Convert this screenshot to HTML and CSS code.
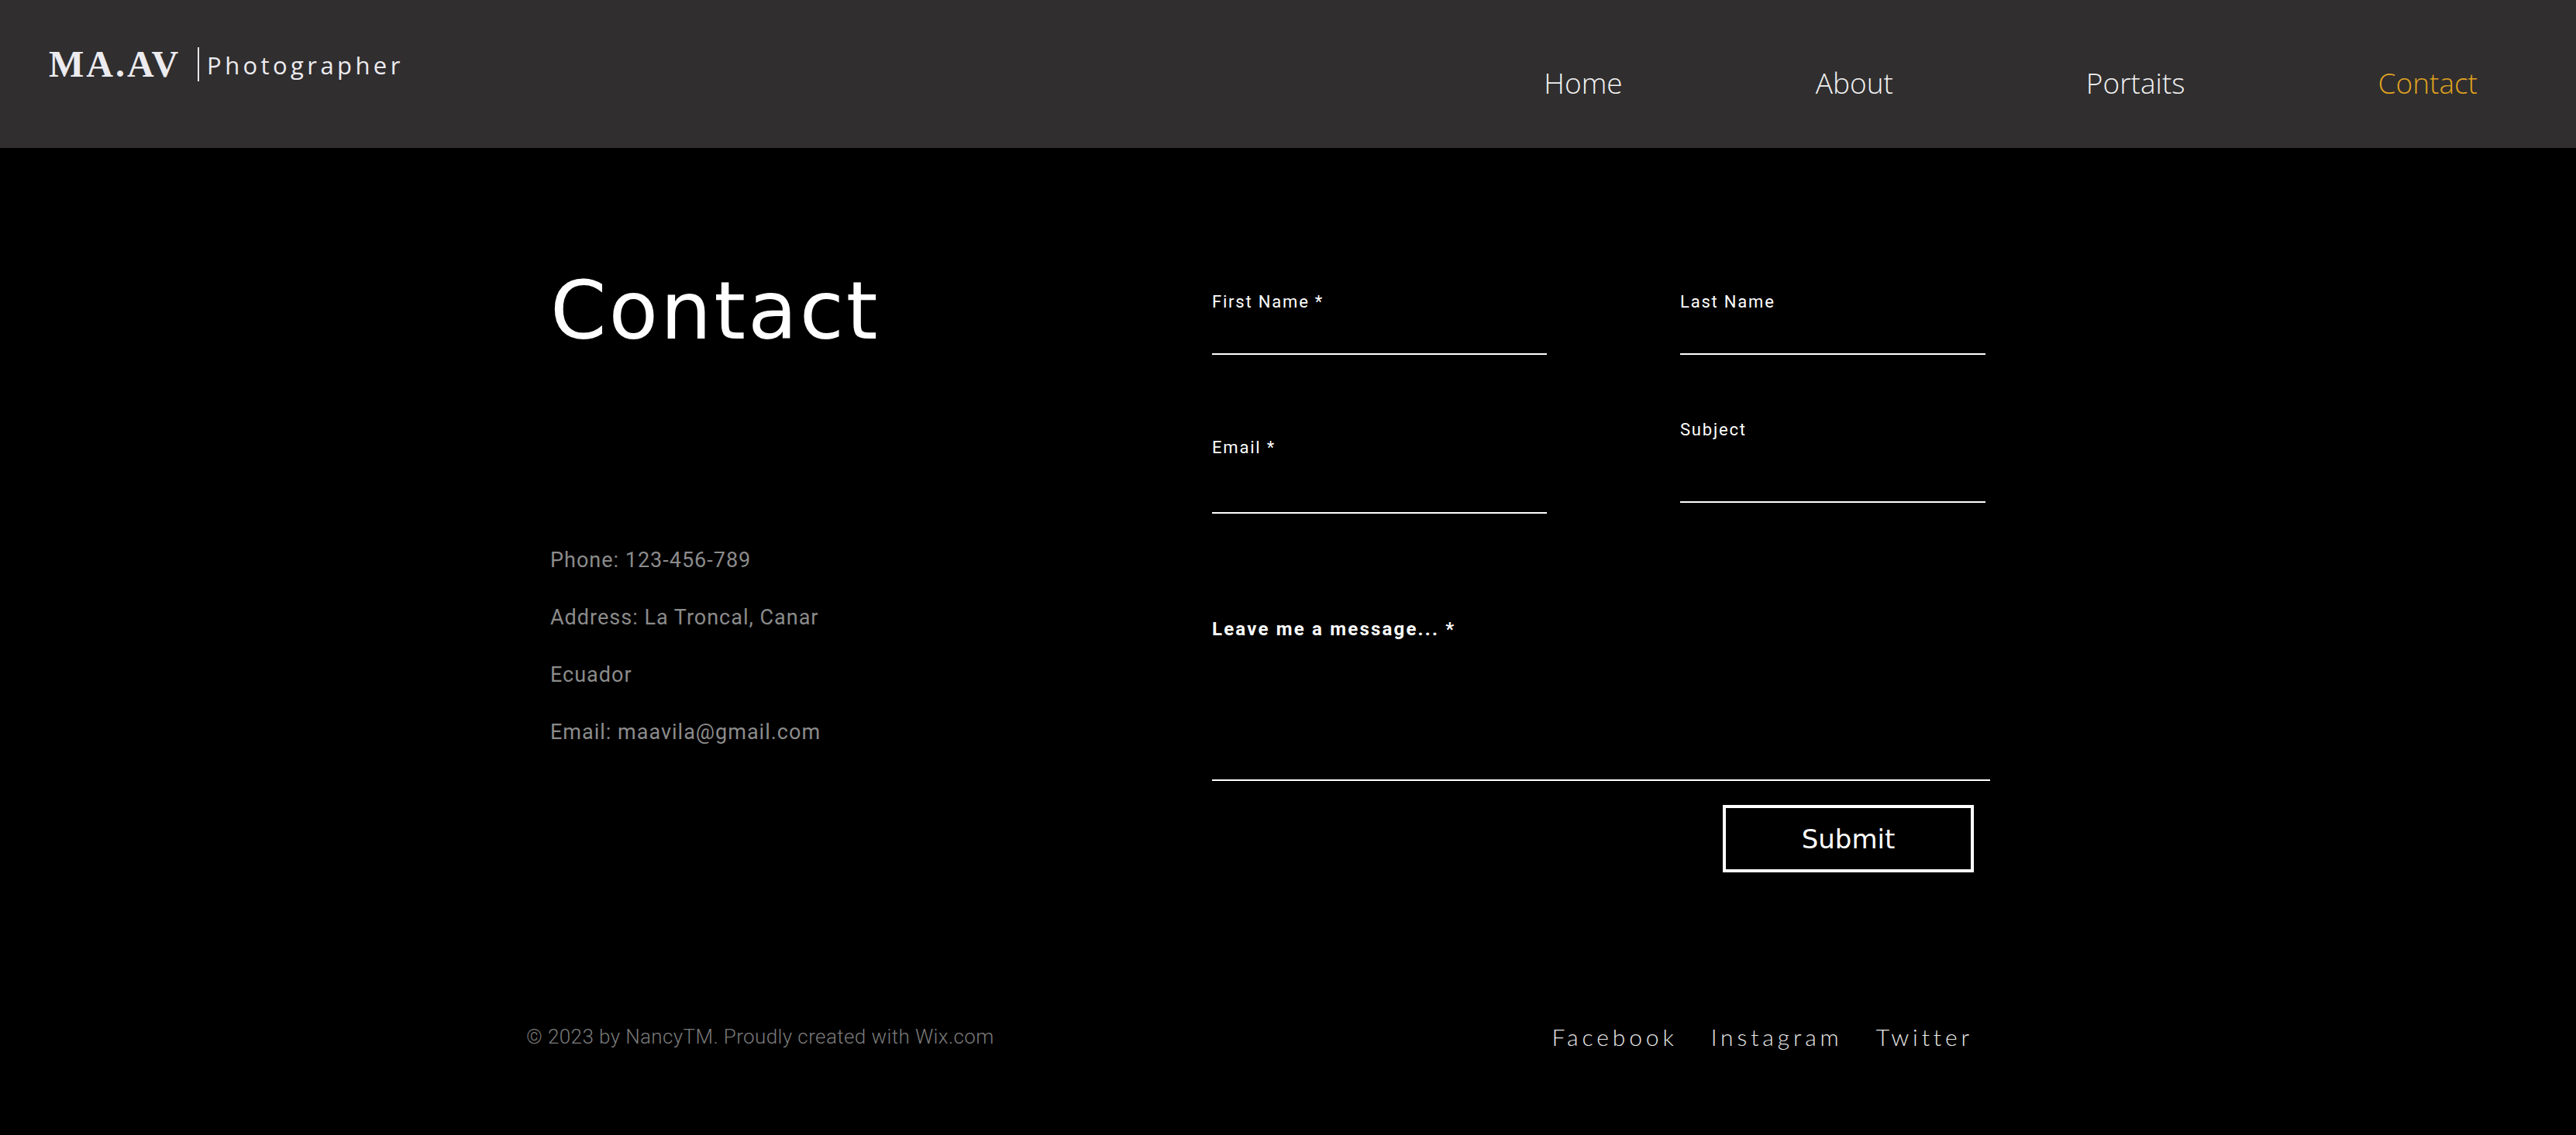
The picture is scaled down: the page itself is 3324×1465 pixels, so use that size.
FILE: index.html
```html
<!DOCTYPE html>
<html lang="en">
<head>
<meta charset="utf-8">
<title>Contact | MA.AV Photographer</title>
<link rel="stylesheet" href="styles.css">
</head>
<body>
<header class="site-header">
  <div class="logo">
    <span class="logo-mark">MA.AV</span>
    <span class="logo-sep"></span>
    <span class="logo-sub">Photographer</span>
  </div>
  <nav class="nav">
    <a class="nav-link" href="#">Home</a>
    <a class="nav-link" href="#">About</a>
    <a class="nav-link" href="#">Portaits</a>
    <a class="nav-link nav-link-active" href="#">Contact</a>
  </nav>
</header>
<main class="contact">
  <section class="info">
    <h1 class="info-title">Contact</h1>
    <ul class="info-list">
      <li>Phone: 123-456-789</li>
      <li>Address: La Troncal, Canar</li>
      <li>Ecuador</li>
      <li>Email: maavila@gmail.com</li>
    </ul>
  </section>
  <form class="form">
    <div class="form-row">
      <div class="form-col form-col-left">
        <div class="field field-first">
          <span class="field-label">First Name *</span>
          <span class="field-input"></span>
        </div>
        <div class="field field-email">
          <span class="field-label">Email *</span>
          <span class="field-input"></span>
        </div>
      </div>
      <div class="form-col form-col-right">
        <div class="field field-last">
          <span class="field-label">Last Name</span>
          <span class="field-input"></span>
        </div>
        <div class="field field-subject">
          <span class="field-label">Subject</span>
          <span class="field-input"></span>
        </div>
      </div>
    </div>
    <div class="field field-message">
      <span class="field-label field-label-bold">Leave me a message... *</span>
      <span class="field-input"></span>
    </div>
    <div class="form-actions">
      <button class="submit" type="button">Submit</button>
    </div>
  </form>
</main>
<footer class="site-footer">
  <p class="copyright">© 2023 by NancyTM. Proudly created with Wix.com</p>
  <div class="social">
    <a class="social-link" href="#">Facebook</a>
    <a class="social-link" href="#">Instagram</a>
    <a class="social-link" href="#">Twitter</a>
  </div>
</footer>
</body>
</html>
```
FILE: styles.css
```css
* { box-sizing: border-box; }
html, body { margin: 0; padding: 0; }
body {
  background: #000;
  color: #fff;
  font-family: Roboto, "Open Sans", sans-serif;
  width: 3324px;
  height: 1465px;
  overflow: hidden;
}
a { text-decoration: none; color: inherit; }

/* Header */
.site-header {
  height: 191px;
  background: #302e2f;
  display: flex;
  align-items: center;
  justify-content: space-between;
  padding: 0 127px 0 63px;
}
.logo {
  display: flex;
  align-items: center;
  margin-top: -26px;
}
.logo-mark {
  font-family: "Liberation Serif", serif;
  font-weight: 700;
  font-size: 48px;
  letter-spacing: 3px;
  color: #ecebef;
}
.logo-sep {
  width: 2px;
  height: 44px;
  background: #e6e6ea;
  margin: 0 10px 0 22px;
}
.logo-sub {
  font-family: "Open Sans", sans-serif;
  font-weight: 400;
  font-size: 31px;
  letter-spacing: 4.4px;
  color: #ecebef;
  margin-top: 2px;
}
.nav {
  display: flex;
  gap: 249px;
  margin-top: 22px;
}
.nav-link {
  font-family: "Open Sans", sans-serif;
  font-weight: 300;
  font-size: 37px;
  color: #f2f2f2;
}
.nav-link-active { color: #e0a420; }

/* Main */
.contact {
  display: flex;
  padding: 158px 0 0 710px;
  height: 935px;
}
.info { width: 854px; }
.info-title {
  margin: 0;
  font-family: "DejaVu Sans", sans-serif;
  font-weight: 400;
  font-size: 104px;
  letter-spacing: 3px;
  line-height: 1;
  color: #fff;
}
.info-list {
  list-style: none;
  margin: 233px 0 0;
  padding: 0;
  font-family: Roboto, sans-serif;
  font-size: 27px;
  letter-spacing: 1px;
  line-height: 74px;
  color: #8b8b8b;
}

.form {
  width: 1004px;
  margin-top: 28px;
}
.form-row { display: flex; gap: 172px; }
.form-col-left { width: 432px; }
.form-col-right { width: 394px; }
.field { display: flex; flex-direction: column; }
.field-label {
  font-family: Roboto, sans-serif;
  font-size: 22px;
  letter-spacing: 1.8px;
  line-height: 26px;
  color: #fff;
}
.field-label-bold { font-weight: 700; font-size: 24px; letter-spacing: 2.2px; }
.field-input {
  display: block;
  border-bottom: 2px solid #fff;
}
.field-first .field-input,
.field-last .field-input { height: 55px; }
.field-email { margin-top: 107px; }
.field-email .field-input { height: 72px; }
.field-subject { margin-top: 84px; }
.field-subject .field-input { height: 81px; }
.field-message { margin-top: 136px; }
.field-message .field-input { height: 183px; }

.form-actions {
  display: flex;
  justify-content: flex-end;
  padding-right: 21px;
  margin-top: 31px;
}
.submit {
  width: 324px;
  height: 87px;
  background: #000;
  border: 4px solid #fff;
  color: #fff;
  font-family: "DejaVu Sans", sans-serif;
  font-size: 34px;
  padding: 0;
}

/* Footer */
.site-footer {
  display: flex;
  justify-content: space-between;
  align-items: center;
  width: 2546px;
  padding: 194px 0 0 679px;
}
.copyright {
  margin: 0;
  font-family: Roboto, sans-serif;
  font-weight: 300;
  font-size: 26px;
  letter-spacing: 0.4px;
  color: #7a7a7a;
}
.social { display: flex; gap: 43px; }
.social-link {
  font-family: Lato, sans-serif;
  font-weight: 300;
  font-size: 30px;
  letter-spacing: 4.9px;
  color: #e8e8e8;
}
```
